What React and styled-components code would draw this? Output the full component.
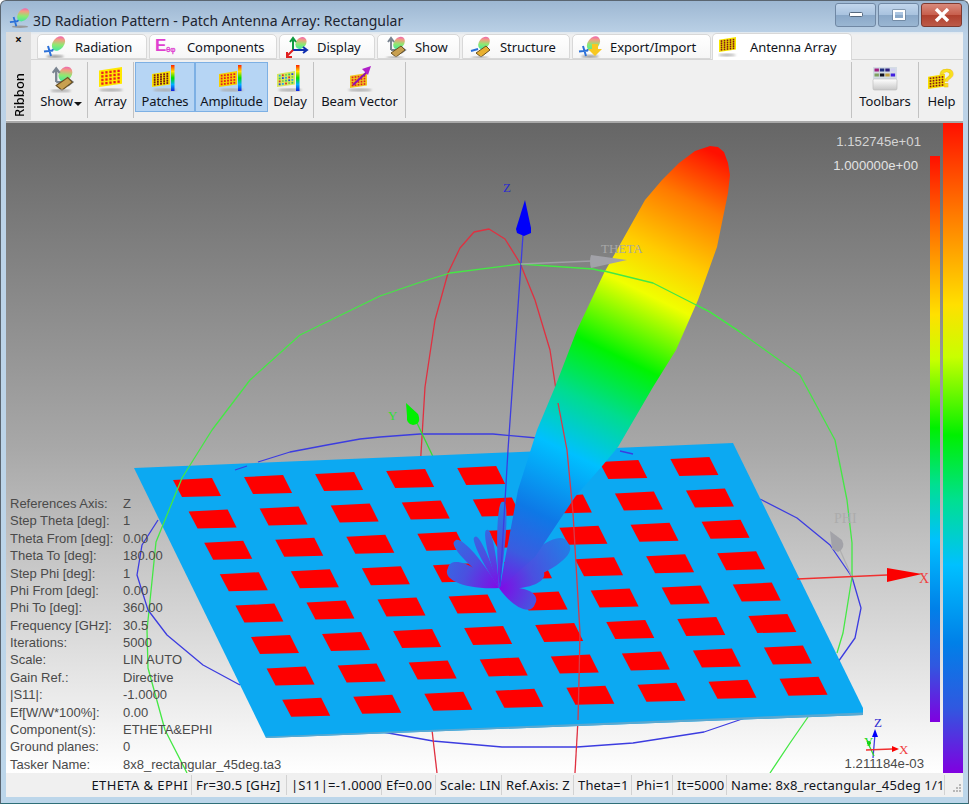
import React from 'react'
import styled, { createGlobalStyle } from 'styled-components'

const UI_FONT = `"Noto Sans", "Open Sans", sans-serif`
const RAINBOW = 'linear-gradient(to bottom, #ff1000 0%, #ff7a00 14%, #ffe000 28%, #c8ff00 36%, #00f000 48%, #00e090 58%, #00c0ff 68%, #0080e8 80%, #3058e0 90%, #8000e0 100%)'

const GlobalStyle = createGlobalStyle`
  html, body { margin: 0; padding: 0; background: #fff; }
  body { font-family: ${UI_FONT}; overflow: hidden; }
`

const Window = styled.div`
  width: 969px;
  height: 804px;
  box-sizing: border-box;
  display: flex;
  flex-direction: column;
  border: 1px solid #5a6570;
  border-bottom-color: #2f6f78;
  border-radius: 6px 6px 0 0;
  background: linear-gradient(to bottom, #9db7d2 0, #bcd2e7 34px, #bcd6ea 100%);
  overflow: hidden;
`

const TitleBar = styled.div`
  height: 31px;
  flex: none;
  display: flex;
  align-items: center;
  padding: 0 6px 0 8px;
`

const TitleText = styled.div`
  flex: 1;
  padding: 7px 0 0 2px;
  font-size: 14px;
  color: #1d2430;
  white-space: nowrap;
`

const CaptionButton = styled.div`
  width: 41px;
  height: 24px;
  margin-left: 2px;
  margin-top: -3px;
  box-sizing: border-box;
  display: flex;
  align-items: center;
  justify-content: center;
  border: 1px solid ${p => (p.$close ? '#7d3a30' : '#7088a4')};
  border-radius: 3px;
  background: ${p => (p.$close
    ? 'linear-gradient(to bottom, #d88a7c 0%, #c8604e 48%, #b0402e 52%, #bc5a48 100%)'
    : 'linear-gradient(to bottom, #c2d6ec 0%, #a9c3df 48%, #8aa8c8 52%, #9ab6d2 100%)')};
`

const Body = styled.div`
  flex: 1;
  display: flex;
  flex-direction: column;
  padding: 0 5px 6px 5px;
  min-height: 0;
`

const Ribbon = styled.div`
  height: 91px;
  flex: none;
  display: flex;
  background: #f0f0f0;
  border-bottom: 2px solid #a9a9a9;
  box-sizing: border-box;
`

const RibbonHandle = styled.div`
  width: 25px;
  flex: none;
  display: flex;
  flex-direction: column;
  align-items: center;
  justify-content: space-between;
  padding: 1px 0 3px;
  margin-bottom: 1px;
  box-sizing: border-box;
  background: #dcdcdc;
`

const HandleClose = styled.div`
  font-size: 12px;
  font-weight: 700;
  line-height: 14px;
  color: #111;
`

const HandleLabel = styled.div`
  writing-mode: vertical-rl;
  transform: rotate(180deg);
  font-size: 13px;
  font-weight: 500;
  color: #000;
`

const RibbonMain = styled.div`
  flex: 1;
  display: flex;
  flex-direction: column;
  min-width: 0;
`

const TabRow = styled.div`
  height: 28px;
  flex: none;
  display: flex;
  align-items: flex-end;
  gap: 2px;
  padding-left: 6px;
  background: linear-gradient(to bottom, #dfe8f0 0, #f0f0f0 3px);
  border-bottom: 1px solid #d4d4d4;
  box-sizing: border-box;
`

const Tab = styled.div`
  width: ${p => p.$w}px;
  height: ${p => (p.$active ? 27 : 25)}px;
  margin-bottom: ${p => (p.$active ? -1 : 0)}px;
  margin-left: ${p => (p.$active ? -1 : 0)}px;
  flex: none;
  box-sizing: border-box;
  display: flex;
  align-items: center;
  padding-left: 5px;
  gap: 8px;
  border: 1px solid #d8d8d8;
  border-bottom: ${p => (p.$active ? 'none' : '1px solid #d8d8d8')};
  border-radius: 5px 5px 0 0;
  background: ${p => (p.$active ? '#fff' : 'linear-gradient(to bottom, #fff 0%, #f6f6f6 100%)')};
  font-size: 13px;
  letter-spacing: -0.1px;
  color: #10141c;
  white-space: nowrap;
`

const TabIconSlot = styled.span`
  width: 24px;
  height: 22px;
  flex: none;
  display: block;
`

const ToolRow = styled.div`
  flex: 1;
  display: flex;
  align-items: flex-start;
  padding: 2px 0 0 3px;
  min-height: 0;
`

const ToolButton = styled.div`
  position: relative;
  width: ${p => p.$w}px;
  height: 50px;
  flex: none;
  box-sizing: border-box;
  display: flex;
  flex-direction: column;
  align-items: center;
  border: 1px solid ${p => (p.$on ? '#7db0e4' : 'transparent')};
  background: ${p => (p.$on ? '#b6d5f4' : 'transparent')};
  font-size: 13px;
  letter-spacing: -0.1px;
  color: #10141c;
  white-space: nowrap;
`

const ToolLabel = styled.div`
  line-height: 18px;
  margin-top: -1px;
  margin-right: ${p => p.$shift || 0}px;
`

const ToolSeparator = styled.div`
  width: 1px;
  height: 56px;
  flex: none;
  margin: 0 1px;
  background: #c2c2c2;
`

const ToolSpacer = styled.div`
  flex: 1;
`

const ToolGlyph = styled.svg`
  flex: none;
  margin-top: 2px;
  overflow: visible;
`

const TitleGlyph = styled.svg`
  flex: none;
  margin-top: 3px;
`

const Caret = styled.span`
  position: absolute;
  right: 3px;
  bottom: 5px;
  width: 0;
  height: 0;
  border-left: 4px solid transparent;
  border-right: 4px solid transparent;
  border-top: 4px solid #111;
`

const Viewport = styled.div`
  position: relative;
  height: 650px;
  flex: none;
  background: linear-gradient(to bottom, #666 0%, #a8a8a8 50%, #fff 100%);
  overflow: hidden;
`

const PlotSvg = styled.svg`
  position: absolute;
  inset: 0;
  width: 956px;
  height: 650px;
  display: block;
`

const Wire = styled.polyline`
  fill: none;
  stroke: ${p => p.$c};
  stroke-width: 1.3;
  stroke-linejoin: round;
`

const AxisText = styled.text`
  font-family: "Liberation Serif", serif;
  font-size: ${p => p.$s || 13}px;
  fill: ${p => p.$c};
`

const ScaleBar = styled.div`
  position: absolute;
  top: ${p => p.$top}px;
  bottom: ${p => p.$bottom}px;
  right: ${p => p.$right}px;
  width: ${p => p.$w}px;
  background: ${RAINBOW};
`

const ScaleValue = styled.div`
  position: absolute;
  font-family: "Liberation Sans", sans-serif;
  font-size: 13.2px;
  line-height: 16px;
  color: ${p => p.$c};
  right: ${p => p.$right}px;
  top: ${p => p.$top}px;
`

const InfoTable = styled.div`
  position: absolute;
  left: 4px;
  bottom: 0;
  display: grid;
  grid-template-columns: 113px auto;
  grid-auto-rows: 17.4px;
  align-items: center;
  font-family: "Liberation Sans", sans-serif;
  font-size: 13px;
  color: #4a4a4a;
  white-space: nowrap;
`

const StatusBar = styled.div`
  height: 24px;
  flex: none;
  display: flex;
  align-items: center;
  background: #f0f0f0;
  font-size: 13px;
  letter-spacing: 0.15px;
  color: #10141c;
  white-space: nowrap;
`

const StatusCell = styled.div`
  width: ${p => p.$w}px;
  flex: none;
  height: 20px;
  line-height: 20px;
  box-sizing: border-box;
  padding: 0 3px 0 4px;
  text-align: ${p => (p.$end ? 'right' : 'left')};
  letter-spacing: ${p => (p.$end ? '0.4px' : 'inherit')};
  border-right: 1px solid #d2d2d2;
  overflow: hidden;
`

const Grip = styled.svg`
  width: 12px;
  height: 12px;
  margin: 8px 0 0 5px;
  display: block;
`

const HiddenDefs = styled.svg`
  position: absolute;
  width: 0;
  height: 0;
`

function SharedDefs() {
  return (
    <HiddenDefs>
      <defs>
        <linearGradient id="mainLobe" gradientUnits="userSpaceOnUse" x1="505" y1="590" x2="720" y2="150">
          <stop offset="0" stopColor="#7a10e8" />
          <stop offset="0.08" stopColor="#3a5ce0" />
          <stop offset="0.17" stopColor="#0e78e6" />
          <stop offset="0.31" stopColor="#00c0ff" />
          <stop offset="0.42" stopColor="#00dc90" />
          <stop offset="0.53" stopColor="#00f400" />
          <stop offset="0.67" stopColor="#f0ff00" />
          <stop offset="0.76" stopColor="#ffcc00" />
          <stop offset="0.88" stopColor="#ff7a00" />
          <stop offset="0.99" stopColor="#ff1000" />
        </linearGradient>
        <radialGradient id="petal" gradientUnits="userSpaceOnUse" cx="499" cy="588" r="90">
          <stop offset="0" stopColor="#8208e6" />
          <stop offset="0.4" stopColor="#4a50e0" />
          <stop offset="1" stopColor="#1c86e6" />
        </radialGradient>
        <linearGradient id="iconLobe" x1="0" y1="0.7" x2="1" y2="0.2">
          <stop offset="0" stopColor="#40e8a0" />
          <stop offset="0.4" stopColor="#90e870" />
          <stop offset="0.7" stopColor="#f0a080" />
          <stop offset="1" stopColor="#f050c0" />
        </linearGradient>
        <linearGradient id="iconBar" x1="0" y1="0" x2="0" y2="1">
          <stop offset="0" stopColor="#ff2000" />
          <stop offset="0.25" stopColor="#ffe000" />
          <stop offset="0.5" stopColor="#00e000" />
          <stop offset="0.75" stopColor="#00b0ff" />
          <stop offset="1" stopColor="#1020e0" />
        </linearGradient>
        <linearGradient id="iconKeys" x1="0" y1="0" x2="0" y2="1">
          <stop offset="0" stopColor="#fff" />
          <stop offset="1" stopColor="#c8c8c8" />
        </linearGradient>
        <filter id="soft"><feGaussianBlur stdDeviation="0.8" /></filter>
      </defs>
    </HiddenDefs>
  )
}

// icons --------------------------------------------------------------

function LobeMark({ x = 0, y = 0 }) {
  return (
    <g transform={`translate(${x} ${y})`}>
      <ellipse cx="12" cy="20.5" rx="9" ry="1.4" fill="#999" filter="url(#soft)" />
      <path d="M1 15.5 L10 14.5 M5 10 L8 20 M8 15 L11 13" stroke="#2a70d8" strokeWidth="2" fill="none" />
      <ellipse cx="15.5" cy="7.5" rx="8" ry="5.6" transform="rotate(-52 15.5 7.5)" fill="url(#iconLobe)" />
    </g>
  )
}

function AxesMark({ colored }) {
  const up = colored ? '#109a40' : '#7a8490'
  const right = colored ? '#1030b0' : '#7a8490'
  const down = colored ? '#e02020' : '#7a8490'
  return (
    <g fill="none" strokeWidth="2">
      <path d="M8 14 L8 3 M5 6 L8 2 L11 6" stroke={up} />
      <path d="M8 14 L21 14 M18 11 L22 14 L18 17" stroke={right} />
      {colored && <path d="M8 14 L2 20 M2 16 L2 21 L7 21" stroke={down} />}
    </g>
  )
}

function Pencil({ c1 = '#e8b030', c2 = '#6a5020' }) {
  return (
    <g>
      <path d="M8 17 L18 10 L22 14 L13 21 Z" fill={c1} stroke={c2} strokeWidth="1" />
      <ellipse cx="12" cy="21.5" rx="9" ry="1.2" fill="#aaa" filter="url(#soft)" />
    </g>
  )
}

function TabIcon({ kind }) {
  return (
    <TabIconSlot as="svg" viewBox="0 0 24 22">
      {kind === 'radiation' && <LobeMark />}
      {kind === 'components' && (
        <g fill="#e040d0" fontFamily="Liberation Sans, sans-serif" fontWeight="700">
          <text x="0" y="15" fontSize="17">E</text>
          <text x="11" y="16" fontSize="8" fontWeight="400" stroke="#e040d0" strokeWidth="0.3">θφ</text>
        </g>
      )}
      {kind === 'display' && (
        <g>
          <ellipse cx="16" cy="7" rx="6.5" ry="5" transform="rotate(-52 16 7)" fill="url(#iconLobe)" />
          <AxesMark colored />
        </g>
      )}
      {kind === 'show' && (
        <g>
          <ellipse cx="16" cy="7" rx="7" ry="5" transform="rotate(-52 16 7)" fill="url(#iconLobe)" />
          <AxesMark />
          <Pencil c1="#c8a050" />
        </g>
      )}
      {kind === 'structure' && (
        <g>
          <ellipse cx="16" cy="7" rx="7" ry="5" transform="rotate(-52 16 7)" fill="url(#iconLobe)" />
          <path d="M3 15 L10 13" stroke="#2a70d8" strokeWidth="2" />
          <Pencil />
        </g>
      )}
      {kind === 'export' && (
        <g>
          <LobeMark />
          <path d="M14 8 L20 8 L20 13 L24 13 L17 20 L10 13 L14 13 Z" fill="#f8c820" />
        </g>
      )}
      {kind === 'array' && (
        <g>
          <ArrayPanel x={1} y={1} w={17} h={15} cols={5} rows={5} dot="#801818" fill="#f8e800" />
          <ellipse cx="9" cy="19" rx="9" ry="1.2" fill="#aaa" filter="url(#soft)" />
        </g>
      )}
    </TabIconSlot>
  )
}

function ArrayPanel({ x, y, w, h, cols, rows, dot, fill = '#f8d800', dotFn }) {
  const cells = []
  for (let r = 0; r < rows; r++) {
    for (let c = 0; c < cols; c++) {
      const cx = x + ((c + 0.5) / cols) * w * 0.88 + w * 0.06
      const cy = y + ((r + 0.5) / rows) * h * 0.72 + h * 0.2 - (c / cols) * h * 0.12
      const s = Math.max(1.4, (w / cols) * 0.5)
      cells.push(<rect key={r + '-' + c} x={cx - s / 2} y={cy - s / 2} width={s} height={s} fill={dotFn ? dotFn(r, c) : dot} />)
    }
  }
  return (
    <g>
      <polygon points={`${x},${y + h * 0.18} ${x + w},${y} ${x + w},${y + h * 0.84} ${x},${y + h}`} fill={fill} />
      {cells}
    </g>
  )
}

const PanelShadow = () => <ellipse cx="16" cy="25" rx="12" ry="1.4" fill="#aaa" filter="url(#soft)" />
const RainBar = () => <rect x="22" y="0" width="3.5" height="26" fill="url(#iconBar)" />

const delayColors = ['#20a0f0', '#30c060', '#e03020', '#2040e0', '#80d040']

function ToolIcon({ kind }) {
  let inner = null
  if (kind === 'show') {
    inner = (
      <g transform="translate(3 1) scale(1.15)">
        <ellipse cx="16" cy="7" rx="7" ry="5.4" transform="rotate(-52 16 7)" fill="url(#iconLobe)" />
        <AxesMark />
        <Pencil c1="#c8a050" />
      </g>
    )
  }
  if (kind === 'array') {
    inner = (
      <g>
        <ArrayPanel x={4} y={2} w={23} h={20} cols={5} rows={4} dot="#e82020" fill="#ffe800" />
        <PanelShadow />
      </g>
    )
  }
  if (kind === 'patches') {
    inner = (
      <g>
        <ArrayPanel x={3} y={6} w={18} h={16} cols={5} rows={5} dot="#701818" fill="#f8e000" />
        <PanelShadow />
        <RainBar />
      </g>
    )
  }
  if (kind === 'amplitude') {
    inner = (
      <g>
        <ArrayPanel x={3} y={6} w={18} h={16} cols={5} rows={4} dot="#e02020" fill="#f8d000" />
        <PanelShadow />
        <RainBar />
      </g>
    )
  }
  if (kind === 'delay') {
    inner = (
      <g>
        <ArrayPanel x={3} y={6} w={18} h={16} cols={5} rows={4} fill="#d8e860" dotFn={(r, c) => delayColors[(r + c * 2) % 5]} />
        <PanelShadow />
        <RainBar />
      </g>
    )
  }
  if (kind === 'beam') {
    inner = (
      <g>
        <ArrayPanel x={6} y={8} w={17} h={15} cols={5} rows={4} dot="#e02020" fill="#f0c820" />
        <PanelShadow />
        <path d="M9 20 L24 6" stroke="#9010b0" strokeWidth="2" />
        <path d="M27 1 L18 4 L24 10 Z" fill="#b020c8" />
      </g>
    )
  }
  if (kind === 'toolbars') {
    const keys = ['#a02080', '#203080', '#302080', '#d0d0f0', '#80a060', '#101020', '#c0a040', '#4020e0']
    inner = (
      <g>
        <rect x="4" y="2" width="24" height="12" fill="#d4dce4" />
        {keys.map((k, i) => <rect key={i} x={5.5 + (i % 4) * 5.4} y={3.5 + Math.floor(i / 4) * 5} width="4.4" height="3" fill={k} />)}
        <rect x="4" y="14" width="24" height="11" rx="1.5" fill="url(#iconKeys)" stroke="#bbb" strokeWidth="0.6" />
      </g>
    )
  }
  if (kind === 'help') {
    inner = (
      <g>
        <ArrayPanel x={2} y={9} w={17} h={15} cols={5} rows={4} dot="#801818" fill="#f8e000" />
        <text x="13" y="22" fontSize="26" fontWeight="700" fontFamily="Liberation Sans, sans-serif" fill="#f8e020" stroke="#e8b800" strokeWidth="0.4">?</text>
      </g>
    )
  }
  return <ToolGlyph width="32" height="28" viewBox="0 0 32 28">{inner}</ToolGlyph>
}

function WindowIcon() {
  return (
    <TitleGlyph width="22" height="22" viewBox="0 0 24 22">
      <LobeMark />
    </TitleGlyph>
  )
}

// plot ---------------------------------------------------------------

const PATCH = '0,0 39,-2 48,16 9,17'

function makePatches() {
  const out = []
  for (let r = 0; r < 8; r++) {
    for (let c = 0; c < 8; c++) {
      const x = 173 + c * 71.05 + r * 15.6
      const y = 480 - c * 3 + r * 31.4
      out.push(<polygon key={r + '-' + c} points={PATCH} transform={`translate(${x} ${y})`} fill="#fe0000" />)
    }
  }
  return out
}

function petal(tx, ty, w) {
  const ox = 499
  const oy = 588
  const dx = tx - ox
  const dy = ty - oy
  const len = Math.hypot(dx, dy)
  const nx = (-dy / len) * w
  const ny = (dx / len) * w
  const p = (a, b) => `${(ox + dx * a + nx * b).toFixed(1)} ${(oy + dy * a + ny * b).toFixed(1)}`
  return `M${ox} ${oy} C${p(0.55, 1)} ${p(1.04, 0.95)} ${tx} ${ty} C${p(1.04, -0.95)} ${p(0.55, -1)} ${ox} ${oy} Z`
}

const PETALS = [
  [448, 568, 14], [455, 541, 8], [475, 537, 5], [487, 530, 5],
  [503, 502, 6], [568, 543, 17], [543, 570, 14], [535, 604, 13],
]

const LOBE_POINTS = [
  [503, 570], [518, 490], [537, 430], [555, 387], [577, 330], [604, 273], [645, 200],
  [662, 180], [679, 163], [695, 151], [710, 146], [718, 147], [724, 152], [728, 163],
  [730, 175], [728, 193], [717, 247], [698, 300], [676, 350], [653, 387], [618, 447],
  [603, 465], [575, 497], [535, 557],
]

const mainLobePath = `M500 588 L${LOBE_POINTS.map(p => p.join(' ')).join(' L')} Z`

function Plot() {
  return (
    <PlotSvg viewBox="6 123 956 650">
      {/* wires behind the plate */}
      <Wire $c="#e03040" points="420,470 425,387 435,320 448,273 460,248 474,232 489,229 505,239 520,263 535,300 550,350 558,403" />
      <Wire $c="#3c3ce0" points="258,462 290,452 327,445 360,439 380,437 420,434 493,434 537,438" />
      <Wire $c="#3c3ce0" points="640,455 700,475 762,500 797,518 830,545 852,577 861,608 855,638 838,662" />
      <Wire $c="#3c3ce0" points="377,731 433,741 502,747 577,747 633,743 704,732 751,716" />
      <Wire $c="#e03040" points="432,730 437,773" />
      <Wire $c="#e03040" points="578,720 575,773" />
      <Wire $c="#44e844" points="380,296 418,283 450,273 520,264 593,269 653,283 710,312 740,332 800,375 835,440 847,500 852,543 852,577 843,633 837,653" />
      <Wire $c="#44e844" points="808,717 790,743 770,773" />
      <Wire $c="#30e030" points="417,423 436,463" />

      {/* plate */}
      <polygon points="134,468 733,443 863,708 863,715 266,738" fill="#0ca9f2" />
      <polygon points="266,736.5 863,712.5 863,715 266,738" fill="#5aa8d0" />
      {makePatches()}
      <Wire $c="#3c3ce0" points="235,470 247,466" />
      <Wire $c="#3c3ce0" points="620,451 633,454" />

      {/* lobes */}
      {PETALS.map((p, i) => <path key={i} d={petal(p[0], p[1], p[2])} fill="url(#petal)" />)}
      <path d={mainLobePath} fill="url(#mainLobe)" />

      {/* wires and axes in front */}
      <Wire $c="#3c3ce0" points="523,235 508,450 500,587" />
      <polygon points="525,200 531,228 531,233 524,236 517,233 516,229" fill="#0000fa" />
      <Wire $c="#d83a48" points="558,403 567,450 573,513 580,633 579,680 578,720" />
      <Wire $c="#44e844" points="600,270 653,283 710,312 740,332" />
      <Wire $c="#44e844" points="212,430 182,478 156,542 147,630 148,668 165,730 187,773" />
      <Wire $c="#44e844" points="212,430 250,380 300,335 380,296" />
      <Wire $c="#3c3ce0" points="158,520 142,545 137,575 148,610 167,635 203,665 240,685" />

      {/* theta */}
      <Wire $c="#a0a0a6" points="521,264 592,261" />
      <path d="M591 255 L627 260 L591 268 Q589 261 591 255 Z" fill="#a2a2a8" />
      <AxisText x="601" y="253" $c="#a8a8a8">THETA</AxisText>

      {/* phi */}
      <Wire $c="#b0b0b0" points="840,550 852,577" />
      <path d="M830 531 L842 540 Q846 548 838 552 L832 549 Z" fill="#a2a2a8" />
      <AxisText x="834" y="523" $c="#acacac" $s={14}>PHI</AxisText>

      {/* x, y, z */}
      <Wire $c="#f03030" points="797,579 887,575" />
      <polygon points="887,568 922,574 887,582" fill="#fb0000" />
      <AxisText x="919" y="583" $c="#f04040" $s={14}>X</AxisText>
      <path d="M406 403 L418 414 Q422 424 413 425 Q406 424 407 416 Z" fill="#00f000" />
      <AxisText x="388" y="420" $c="#30e030">Y</AxisText>
      <AxisText x="503" y="192" $c="#2a2ad0">Z</AxisText>

      {/* small triad */}
      <Wire $c="#3c3ce0" points="873,758 875,734" />
      <polygon points="875,729 878,737 872,737" fill="#0000fa" />
      <Wire $c="#30d830" points="867,741 874,756" />
      <circle cx="869" cy="743" r="2" fill="#00d000" />
      <Wire $c="#f03030" points="866,750 892,749" />
      <polygon points="892,746 899,749 892,752" fill="#fb0000" />
      <AxisText x="874" y="727" $c="#2a2ad0">Z</AxisText>
      <AxisText x="864" y="746" $c="#20d820">Y</AxisText>
      <AxisText x="899" y="754" $c="#f04040">X</AxisText>
    </PlotSvg>
  )
}

// data ---------------------------------------------------------------

const TABS = [
  { label: 'Radiation', icon: 'radiation', w: 110 },
  { label: 'Components', icon: 'components', w: 128 },
  { label: 'Display', icon: 'display', w: 96 },
  { label: 'Show', icon: 'show', w: 83 },
  { label: 'Structure', icon: 'structure', w: 108 },
  { label: 'Export/Import', icon: 'export', w: 139 },
  { label: 'Antenna Array', icon: 'array', w: 140, active: true },
]

const INFO = [
  ['References Axis:', 'Z'],
  ['Step Theta [deg]:', '1'],
  ['Theta From [deg]:', '0.00'],
  ['Theta To [deg]:', '180.00'],
  ['Step Phi [deg]:', '1'],
  ['Phi From [deg]:', '0.00'],
  ['Phi To [deg]:', '360.00'],
  ['Frequency [GHz]:', '30.5'],
  ['Iterations:', '5000'],
  ['Scale:', 'LIN AUTO'],
  ['Gain Ref.:', 'Directive'],
  ['|S11|:', '-1.0000'],
  ['Ef[W/W*100%]:', '0.00'],
  ['Component(s):', 'ETHETA&EPHI'],
  ['Ground planes:', '0'],
  ['Tasker Name:', '8x8_rectangular_45deg.ta3'],
]

const STATUS = [
  ['ETHETA & EPHI', 186, true],
  ['Fr=30.5 [GHz]', 95],
  ['|S11|=-1.0000', 95],
  ['Ef=0.00', 54],
  ['Scale: LIN', 66],
  ['Ref.Axis: Z', 72],
  ['Theta=1', 58],
  ['Phi=1', 41],
  ['It=5000', 54],
  ['Name: 8x8_rectangular_45deg 1/1', 218],
]

export default function App() {
  return (
    <>
      <GlobalStyle />
      <SharedDefs />
      <Window>
        <TitleBar>
          <WindowIcon />
          <TitleText>3D Radiation Pattern - Patch Antenna Array: Rectangular</TitleText>
          <CaptionButton>
            <svg width="14" height="6"><rect x="0.5" y="0.5" width="13" height="4" rx="1" fill="#fff" stroke="#54687e" /></svg>
          </CaptionButton>
          <CaptionButton>
            <svg width="14" height="12"><rect x="1" y="1" width="12" height="10" fill="none" stroke="#54687e" strokeWidth="1" /><rect x="2" y="2" width="10" height="8" fill="none" stroke="#fff" strokeWidth="2" /></svg>
          </CaptionButton>
          <CaptionButton $close>
            <svg width="16" height="14" viewBox="0 0 16 14"><path d="M2 1 L14 13 M14 1 L2 13" stroke="#fff" strokeWidth="3.4" /></svg>
          </CaptionButton>
        </TitleBar>
        <Body>
          <Ribbon>
            <RibbonHandle>
              <HandleClose>×</HandleClose>
              <HandleLabel>Ribbon</HandleLabel>
            </RibbonHandle>
            <RibbonMain>
              <TabRow>
                {TABS.map(t => (
                  <Tab key={t.label} $w={t.w} $active={t.active}>
                    <TabIcon kind={t.icon} />
                    {t.label}
                  </Tab>
                ))}
              </TabRow>
              <ToolRow>
                <ToolButton $w={52}>
                  <ToolIcon kind="show" />
                  <ToolLabel $shift={7}>Show</ToolLabel>
                  <Caret />
                </ToolButton>
                <ToolSeparator />
                <ToolButton $w={43}><ToolIcon kind="array" /><ToolLabel>Array</ToolLabel></ToolButton>
                <ToolSeparator />
                <ToolButton $w={60} $on><ToolIcon kind="patches" /><ToolLabel>Patches</ToolLabel></ToolButton>
                <ToolButton $w={73} $on><ToolIcon kind="amplitude" /><ToolLabel>Amplitude</ToolLabel></ToolButton>
                <ToolButton $w={44}><ToolIcon kind="delay" /><ToolLabel>Delay</ToolLabel></ToolButton>
                <ToolSeparator />
                <ToolButton $w={89}><ToolIcon kind="beam" /><ToolLabel>Beam Vector</ToolLabel></ToolButton>
                <ToolSeparator />
                <ToolSpacer />
                <ToolSeparator />
                <ToolButton $w={64}><ToolIcon kind="toolbars" /><ToolLabel>Toolbars</ToolLabel></ToolButton>
                <ToolSeparator />
                <ToolButton $w={43}><ToolIcon kind="help" /><ToolLabel>Help</ToolLabel></ToolButton>
              </ToolRow>
            </RibbonMain>
          </Ribbon>
          <Viewport>
            <Plot />
            <ScaleBar $top={0} $bottom={0} $right={0} $w={20} />
            <ScaleBar $top={33} $bottom={51} $right={23} $w={10} />
            <ScaleValue $c="#d4d4d4" $right={42} $top={11}>1.152745e+01</ScaleValue>
            <ScaleValue $c="#e2e2e2" $right={45} $top={35}>1.000000e+00</ScaleValue>
            <ScaleValue $c="#4a4a4a" $right={39} $top={633}>1.211184e-03</ScaleValue>
            <InfoTable>
              {INFO.map(([k, v]) => (
                <React.Fragment key={k}>
                  <span>{k}</span>
                  <span>{v}</span>
                </React.Fragment>
              ))}
            </InfoTable>
          </Viewport>
          <StatusBar>
            {STATUS.map(([text, w, end]) => (
              <StatusCell key={text} $w={w} $end={end}>{text}</StatusCell>
            ))}
            <Grip viewBox="0 0 12 12">
              {[[9, 1], [6, 4], [9, 4], [3, 7], [6, 7], [9, 7]].map(([x, y]) => (
                <rect key={x + '-' + y} x={x} y={y} width="2" height="2" fill="#b8b8b8" />
              ))}
            </Grip>
          </StatusBar>
        </Body>
      </Window>
    </>
  )
}
